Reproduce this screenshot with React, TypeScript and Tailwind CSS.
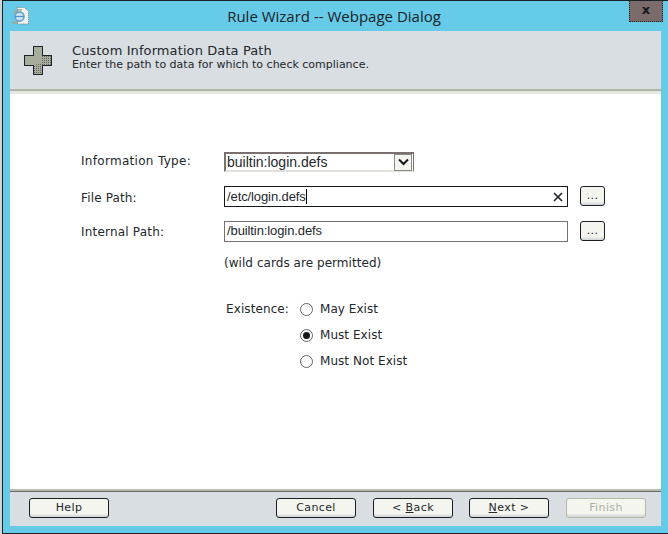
const dither = "bg-[#f5f5f0] bg-[radial-gradient(#e4e4de_0.6px,transparent_0.7px)] bg-[length:2px_2px]";

function Cross() {
  return (
    <svg width="29" height="29" viewBox="0 0 29 29" className="shrink-0">
      <defs>
        <pattern id="dots" width="2" height="2" patternUnits="userSpaceOnUse">
          <rect width="2" height="2" fill="#a7ad9b" />
          <rect width="1" height="1" fill="#4c4c4c" />
        </pattern>
      </defs>
      <path d="M9.5.5h9v9h9v10h-9v9h-9v-9h-9v-10h9z" fill="#a7ad9b" stroke="#1c2226" />
      <path d="M18 10h9v9h-9v9h-8v-9l8-2z" fill="url(#dots)" opacity="0.75" />
      <path d="M9.5.5h9v9h9v10h-9v9h-9v-9h-9v-10h9z" fill="none" stroke="#1c2226" />
    </svg>
  );
}

function PageIcon() {
  return (
    <svg width="18" height="18" viewBox="0 0 18 18">
      <path d="M5.500.5h7l4 4v12.500h-11z" fill="#f4f4ee" stroke="#7c8482" strokeDasharray="1 1" />
      <path d="M1 14c-1 2 2 3 6 0" fill="none" stroke="#a3a697" strokeWidth="1.800" />
      <circle cx="7.500" cy="9.500" r="4.500" fill="#d8e8ee" stroke="#6ba6d2" strokeWidth="1.800" />
      <path d="M3 9.500h9" stroke="#4c94cc" strokeWidth="1.400" />
      <path d="M2 7c0-3 4-5 8-4" fill="none" stroke="#a3a697" strokeWidth="1.600" />
    </svg>
  );
}

function Btn({ label, disabled, wide }: { label: React.ReactNode; disabled?: boolean; wide?: boolean }) {
  return (
    <button
      className={`${wide ? "w-[80px]" : "w-[25px]"} h-[20px] rounded-[3px] border text-[11px] leading-[18px] tracking-[0.4px] ${dither} shadow-[inset_0_-3px_2px_-1px_#d3d6d8] ${
        disabled ? "border-[#b4baa8] text-[#a9b09d]" : "border-[#1a2024] text-[#23282c]"
      }`}
    >
      {label}
    </button>
  );
}

function Radio({ label, checked }: { label: string; checked?: boolean }) {
  return (
    <div className="flex h-[26px] items-center gap-[7px]">
      <span className="flex h-[13px] w-[13px] items-center justify-center rounded-full border border-[#62666a] bg-white">
        {checked && <span className="h-[7px] w-[7px] rounded-full bg-[#15191c]" />}
      </span>
      <span className="tracking-[0.05px]">{label}</span>
    </div>
  );
}

export default function App() {
  return (
    <div className="h-[534px] w-[668px] overflow-hidden bg-[#d4d4d4] pl-[2px] font-['DejaVu_Sans',sans-serif] text-[12px] text-[#23282c]">
      <div className="flex h-full flex-col border-y border-l border-[#1b2226] bg-[#66cbe9]">
        <div className="relative flex h-[30px] shrink-0 items-center pl-[9px]">
          <PageIcon />
          <div className="absolute inset-x-0 top-[5px] pr-[3px] text-center font-['Open_Sans',sans-serif] text-[15px] leading-[20px] text-[#1c2226]">
            Rule Wizard -- Webpage Dialog
          </div>
          <div className="absolute right-[5px] top-0 flex h-[21px] w-[34px] items-center justify-center border border-t-0 border-dotted border-[#1b2226] bg-[#7b6b6b] pb-[2px] text-[13px] font-bold text-[#14181a]">
            x
          </div>
        </div>

        <div className="ml-[7px] mr-[7px] flex min-h-0 flex-1 flex-col bg-white">
          <div className="flex h-[60px] shrink-0 items-center gap-[19px] border-b-2 border-[#b0b5a8] bg-[#d9dee2] pl-[14px]">
            <Cross />
            <div className="pb-[6px]">
              <div className="text-[13px] leading-[15px] tracking-[0.1px]">Custom Information Data Path</div>
              <div className="text-[11px] leading-[14px]">Enter the path to data for which to check compliance.</div>
            </div>
          </div>
          <div className="h-[3px] shrink-0 bg-[#e6e6e2]" />

          <div className="flex-1 pl-[71px] pt-[58px]">
            <div className="flex h-[20px] items-center">
              <label className="w-[143px] pb-[3px] tracking-[0.3px]">Information Type:</label>
              <div className="flex h-[20px] w-[190px] items-center justify-between border-y-2 border-l-2 border-r border-[#7b7070] border-b-[#e0e0dc] bg-white pl-[1px] pr-[1px] font-['Liberation_Sans',sans-serif] text-[14px]">
                <span>builtin:login.defs</span>
                <span className={`flex h-[17px] w-[18px] items-center justify-center border border-[#8a8a84] ${dither}`}>
                  <svg width="11" height="8" viewBox="0 0 11 8"><path d="M1 1.500l4.500 4.500 4.500-4.500" fill="none" stroke="#14181a" strokeWidth="2" /></svg>
                </span>
              </div>
            </div>
            <div className="mt-[14px] flex h-[21px] items-center">
              <label className="w-[143px] pt-[2px] tracking-[0.15px]">File Path:</label>
              <div className="flex h-[21px] w-[344px] items-center justify-between border border-[#15191c] bg-white pl-[2px] pr-[3px] font-['Liberation_Sans',sans-serif] text-[13px]">
                <span className="border-r border-black leading-[15px] tracking-[-0.1px]">/etc/login.defs</span>
                <svg width="10" height="10" viewBox="0 0 10 10" className="mr-[1px]"><path d="M1 1l8 8M9 1l-8 8" stroke="#23282c" strokeWidth="1.700" /></svg>
              </div>
              <div className="ml-[12px] pb-[1px]"><Btn label="..." /></div>
            </div>
            <div className="mt-[14px] flex h-[21px] items-center">
              <label className="w-[143px] tracking-[0.2px]">Internal Path:</label>
              <div className="flex h-[21px] w-[344px] items-center border border-[#7b7070] bg-white pl-[2px] pb-[1px] font-['Liberation_Sans',sans-serif] text-[13px] tracking-[-0.1px]">
                /builtin:login.defs
              </div>
              <div className="ml-[12px] pb-[1px]"><Btn label="..." /></div>
            </div>
            <div className="mt-[13px] pl-[143px] leading-[16px] tracking-[0.05px]">(wild cards are permitted)</div>
            <div className="mt-[25px] flex pl-[145px]">
              <div className="w-[74px] pt-[4px] tracking-[0.1px]">Existence:</div>
              <div>
                <Radio label="May Exist" />
                <Radio label="Must Exist" checked />
                <Radio label="Must Not Exist" />
              </div>
            </div>
          </div>

          <div className="h-[2px] shrink-0 bg-[#b9bcb0]" />
          <div className="flex h-[35px] shrink-0 items-start border-t border-[#6f6a66] bg-[#d9dee2] pl-[19px] pt-[6px]">
            <Btn wide label="Help" />
            <div className="ml-[167px]"><Btn wide label="Cancel" /></div>
            <div className="ml-[17px]"><Btn wide label={<>&lt; <u>B</u>ack</>} /></div>
            <div className="ml-[16px]"><Btn wide label={<><u>N</u>ext &gt;</>} /></div>
            <div className="ml-[17px]"><Btn wide disabled label="Finish" /></div>
          </div>
        </div>
        <div className="h-[7px] shrink-0" />
      </div>
    </div>
  );
}
